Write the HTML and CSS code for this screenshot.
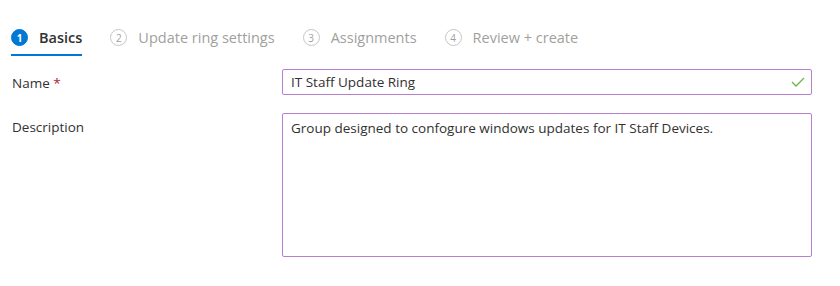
FILE: index.html
```html
<!DOCTYPE html>
<html lang="en">
<head>
  <meta charset="UTF-8" />
  <title>Create profile - Basics</title>
  <link rel="stylesheet" href="styles.css">
</head>
<body>

<!-- Wizard steps -->
<div class="steps">
  <div class="step active">
    <span class="step-num">1</span>
    <span class="step-label">Basics</span>
  </div>
  <div class="step">
    <span class="step-num">2</span>
    <span class="step-label">Update ring settings</span>
  </div>
  <div class="step">
    <span class="step-num">3</span>
    <span class="step-label">Assignments</span>
  </div>
  <div class="step">
    <span class="step-num">4</span>
    <span class="step-label">Review + create</span>
  </div>
</div>

<!-- Form -->
<div class="form">
  <div class="form-row">
    <label class="form-label" for="name">Name <span class="required">*</span></label>
    <div class="field">
      <input type="text" id="name" class="text-input" value="IT Staff Update Ring" />
      <svg class="valid-icon" width="14" height="10" viewBox="0 0 14 10">
        <path d="M1 5 L5 9 L13 1" fill="none" stroke="#6bb34a" stroke-width="1.3" />
      </svg>
    </div>
  </div>

  <div class="form-row">
    <label class="form-label" for="description">Description</label>
    <div class="field">
      <textarea id="description" class="text-area">Group designed to confogure windows updates for IT Staff Devices.</textarea>
    </div>
  </div>
</div>

</body>
</html>
```

FILE: styles.css
```css
html, body {
  margin: 0;
  padding: 0;
  background-color: #ffffff;
  font-family: 'Open Sans', 'Noto Sans', sans-serif;
  color: #323130;
}

.steps {
  display: flex;
  padding: 27px 0 0 11px;
  gap: 28px;
}

.step {
  display: flex;
  align-items: center;
  gap: 11px;
  height: 21px;
  padding-bottom: 6px;
  color: #a19f9d;
  font-size: 14.5px;
  border-bottom: 2px solid transparent;
}

.step.active {
  color: #323130;
  font-weight: 600;
  border-bottom-color: #0078d4;
}

.step-num {
  width: 15px;
  height: 15px;
  border: 1px solid #c8c6c4;
  border-radius: 50%;
  display: flex;
  align-items: center;
  justify-content: center;
  font-size: 10px;
  font-weight: 400;
  color: #a19f9d;
}

.step.active .step-num {
  background-color: #0078d4;
  border-color: #0078d4;
  color: white;
  font-weight: 700;
}

.form {
  padding: 13px 0 0 12px;
  display: flex;
  flex-direction: column;
  gap: 16px;
}

.form-row {
  display: flex;
  align-items: flex-start;
}

.form-label {
  width: 270px;
  font-size: 13.5px;
  line-height: 28px;
}

.required {
  color: #a4262c;
}

.field {
  position: relative;
  width: 530px;
}

.text-input,
.text-area {
  box-sizing: border-box;
  width: 100%;
  margin: 0;
  border: 1px solid #b77fcf;
  border-radius: 2px;
  font-family: inherit;
  font-size: 13.5px;
  color: #323130;
  padding: 0 8px;
  outline: none;
}

.text-input {
  height: 26px;
}

.text-area {
  height: 144px;
  padding-top: 5px;
  resize: none;
  display: block;
}

.valid-icon {
  position: absolute;
  right: 7px;
  top: 8px;
}
```
